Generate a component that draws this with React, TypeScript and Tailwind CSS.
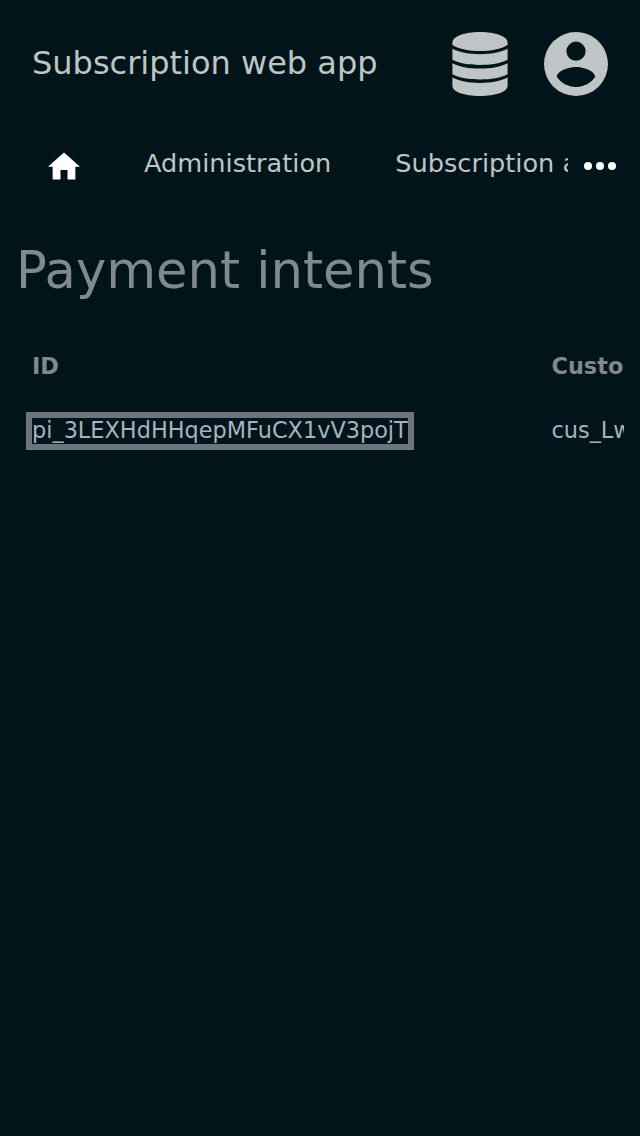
const fontStack = "font-['DejaVu_Sans',sans-serif]";

function DatabaseIcon() {
  return (
    <svg viewBox="0 0 64 64" className="size-16 fill-current" aria-hidden="true">
      <path d="M4.4 10.5C4.4 4.5 16.5 0 32 0S59.6 4.5 59.6 10.5V13C53 17 43 19 32 19S11 17 4.4 13Z" />
      <path d="M4.4 16.8C11 20.4 21 22.2 32 22.2S53 20.4 59.6 16.8V27.8C53 31.3 43 33 32 33S11 31.3 4.4 27.8Z" />
      <path d="M4.4 31.2C11 34.8 21 36.6 32 36.6S53 34.8 59.6 31.2V42.2C53 45.7 43 47.4 32 47.4S11 45.7 4.4 42.2Z" />
      <path d="M4.4 45.6C11 49.2 21 51 32 51S53 49.2 59.6 45.6V54C59.6 59.8 47.5 64 32 64S4.4 59.8 4.4 54Z" />
    </svg>
  );
}

function AccountIcon() {
  return (
    <svg viewBox="2 2 20 20" className="size-16 fill-current" aria-hidden="true">
      <path d="M12,19.2C9.5,19.2 7.29,17.92 6,16C6.03,14 10,12.9 12,12.9C14,12.9 17.97,14 18,16C16.71,17.92 14.5,19.2 12,19.2M12,5A3,3 0 0,1 15,8A3,3 0 0,1 12,11A3,3 0 0,1 9,8A3,3 0 0,1 12,5M12,2A10,10 0 0,0 2,12A10,10 0 0,0 12,22A10,10 0 0,0 22,12C22,6.47 17.5,2 12,2Z" />
    </svg>
  );
}

function HomeIcon() {
  return (
    <svg viewBox="2 1.5 20 20" className="size-8 fill-white" aria-hidden="true">
      <path d="M9.8,20V14H14.2V20H19.1V12H22L12,3L2,12H4.9V20H9.8Z" />
    </svg>
  );
}

function MoreIcon() {
  return (
    <svg viewBox="0 0 32 32" className="size-8 fill-white" aria-hidden="true">
      <circle cx="4" cy="16" r="4" />
      <circle cx="16" cy="16" r="4" />
      <circle cx="28" cy="16" r="4" />
    </svg>
  );
}

export default function App() {
  return (
    <div className={`${fontStack} h-[1136px] w-[640px] overflow-hidden bg-[#001419] text-[#bfc4c5]`}>
      <header className="flex h-32 items-center justify-between px-8">
        <span className="pb-0.5 text-[32px] leading-[38px] whitespace-nowrap">Subscription web app</span>
        <div className="flex gap-8">
          <DatabaseIcon />
          <AccountIcon />
        </div>
      </header>
      <nav className="flex h-[72px] items-center pr-6 pl-12">
        <div className="flex min-w-0 flex-1 items-center gap-16 overflow-hidden">
          <a className="mt-1 shrink-0"><HomeIcon /></a>
          <a className="shrink-0 pb-0.5 text-[25.6px] leading-[30px] whitespace-nowrap">Administration</a>
          <a className="shrink-0 pb-0.5 text-[25.6px] leading-[30px] whitespace-nowrap">Subscription api</a>
        </div>
        <button className="mt-1 ml-4 shrink-0" aria-label="More"><MoreIcon /></button>
      </nav>
      <main className="px-4 pt-10">
        <h1 className="text-[51.2px] leading-[60px] whitespace-nowrap text-[#80898b]">Payment intents</h1>
        <div className="mt-[34px] overflow-hidden">
          <div className="grid w-[1100px] grid-cols-[519.5px_1fr] text-[22.4px] leading-[24px]">
            <div className="px-4 pt-5 pb-5 font-bold text-[#80898b]">ID</div>
            <div className="px-4 pt-5 pb-5 font-bold text-[#80898b]">Customer</div>
            <div className="px-4 py-5 text-[#a5b3bf]">
              <a className="block w-max pb-0.5 outline-[6.4px] outline-[#6c757d] outline-solid">pi_3LEXHdHHqepMFuCX1vV3pojT</a>
            </div>
            <div className="px-4 py-5 text-[#a5b3bf]">cus_LwQ2</div>
          </div>
        </div>
      </main>
    </div>
  );
}
